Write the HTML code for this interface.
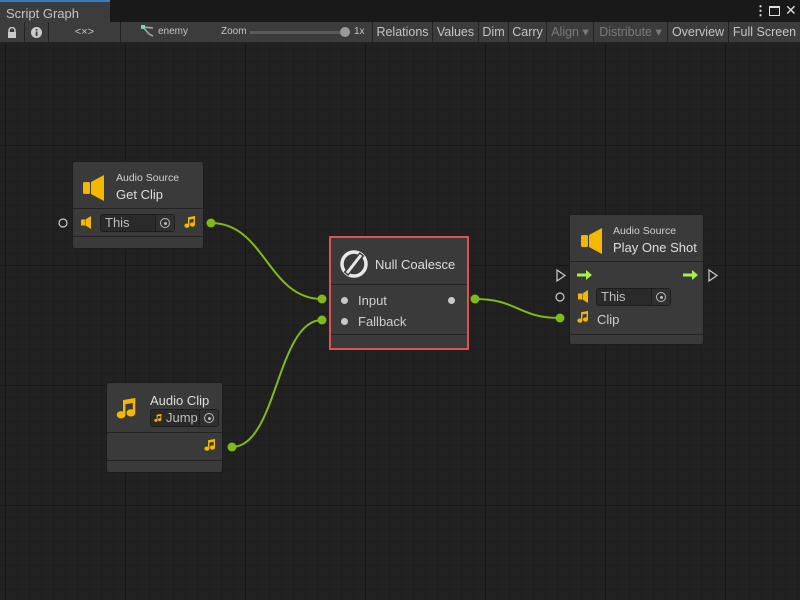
<!DOCTYPE html><html><head><style>
*{margin:0;padding:0;box-sizing:border-box}
body{width:800px;height:600px;overflow:hidden;background:#202020;font-family:"Liberation Sans",sans-serif;position:relative;color:#d2d2d2}
.grid{position:absolute;left:0;top:43px;width:800px;height:557px;
background-image:linear-gradient(#171717 1px,transparent 1px),linear-gradient(90deg,#171717 1px,transparent 1px),linear-gradient(#1d1d1d 1px,transparent 1px),linear-gradient(90deg,#1d1d1d 1px,transparent 1px);
background-size:120px 120px,120px 120px,12px 12px,12px 12px;background-position:0 102px,5px 0,0 6px,5px 0;background-color:#212121}
.tabbar{position:absolute;left:0;top:0;width:800px;height:22px;background:#191919}
.tab{position:absolute;left:0;top:0;width:110px;height:22px;background:#3c3c3c;border-top:2px solid #3a79bb;font-size:13px;color:#c4c4c4;padding:4px 0 0 6px}
.tb{position:absolute;top:22px;height:21px;background:#3c3c3c;border-right:1px solid #232323;border-bottom:1px solid #232323;font-size:12.5px;color:#c4c4c4;text-align:center;line-height:20px}
.dis{color:#7a7a7a}
.node{position:absolute;background:#3a3a3a;border:1px solid #1c1c1c;border-radius:3px}
.sep{position:absolute;left:0;right:0;height:1px;background:#232323}
.t{position:absolute;white-space:nowrap}
.small{font-size:10.5px;color:#d0d0d0}
.big{font-size:13px;color:#dedede}
.field{position:absolute;height:18px;background:#2a2a2a;border:1px solid #1e1e1e;border-radius:3px;font-size:13px;color:#bdbdbd;padding-left:4px;line-height:16px;white-space:nowrap}
.field .ob{position:absolute;right:0;top:0;width:19px;height:16px;border-left:1px solid #1e1e1e;background:#303030}
.ob:after{content:"";position:absolute;left:4px;top:3px;width:8px;height:8px;border:1.3px solid #bbb;border-radius:50%}
.ob:before{content:"";position:absolute;left:8px;top:7px;width:3px;height:3px;background:#bbb;border-radius:50%}
.note{position:absolute}
</style></head><body>
<svg width="0" height="0" style="position:absolute"><defs><g id="n"><path d="M4 1.2 L11 0 V2.6 L4 3.8Z" fill="#f5b800"/><rect x="4" y="1.5" width="1.4" height="8" fill="#f5b800"/><rect x="9.6" y="0.3" width="1.4" height="8" fill="#f5b800"/><ellipse cx="2.9" cy="9.6" rx="2.5" ry="2.1" fill="#f5b800"/><ellipse cx="8.5" cy="8.5" rx="2.5" ry="2.1" fill="#f5b800"/></g></defs></svg>
<div class="grid"></div>
<div class="tabbar"></div>
<div class="tab">Script Graph</div>
<div class="t" style="left:754px;top:3px;color:#ddd;font-size:13px;font-weight:bold">⋮</div>
<div style="position:absolute;left:769px;top:6px;width:11px;height:10px;border:1.5px solid #ddd;border-top-width:2.5px"></div>
<div class="t" style="left:785px;top:2px;color:#ddd;font-size:14px">✕</div>
<div class="tb" style="left:0;width:25px"><svg width="10" height="11" viewBox="0 0 10 11" style="margin-top:5px"><path d="M2 5V3.5a3 3 0 0 1 6 0V5" stroke="#ccc" stroke-width="1.5" fill="none"/><rect x="1" y="5" width="8" height="6" fill="#ccc"/></svg></div>
<div class="tb" style="left:25px;width:24px"><svg width="11" height="11" style="margin-top:5px"><circle cx="5.5" cy="5.5" r="5.5" fill="#ccc"/><rect x="4.7" y="4.5" width="1.8" height="4.5" fill="#3c3c3c"/><rect x="4.7" y="2" width="1.8" height="1.6" fill="#3c3c3c"/></svg></div>
<div class="tb" style="left:49px;width:72px;font-size:11px">&lt;×&gt;</div>
<div class="tb" style="left:121px;width:252px;text-align:left">
<svg width="14" height="12" style="position:absolute;left:20px;top:3px"><path d="M2 2 L8 9 M2 2 L12 3 M8 9 L12 11" stroke="#aaa" stroke-width="1.5" fill="none"/><rect x="0" y="0" width="4" height="4" fill="#6fd6c8"/></svg>
<span style="position:absolute;left:37px;font-size:10px">enemy</span>
<span style="position:absolute;left:100px;font-size:10px">Zoom</span>
<div style="position:absolute;left:129px;top:9px;width:95px;height:3px;background:#5a5a5a"></div>
<div style="position:absolute;left:219px;top:5px;width:10px;height:10px;border-radius:50%;background:#999"></div>
<span style="position:absolute;left:233px;font-size:10px">1x</span></div>
<div class="tb" style="left:373px;width:60px">Relations</div>
<div class="tb" style="left:433px;width:46px">Values</div>
<div class="tb" style="left:479px;width:30px">Dim</div>
<div class="tb" style="left:509px;width:38px">Carry</div>
<div class="tb dis" style="left:547px;width:47px">Align ▾</div>
<div class="tb dis" style="left:594px;width:74px">Distribute ▾</div>
<div class="tb" style="left:668px;width:61px">Overview</div>
<div class="tb" style="left:729px;width:71px;border-right:none">Full Screen</div>

<svg width="800" height="600" style="position:absolute;left:0;top:0">
<g stroke="#7fba1a" stroke-width="2" fill="none">
<path d="M211 223 C265 223 268 299 322 299"/>
<path d="M232 447 C277 447 277 320 322 320"/>
<path d="M475 299 C518 299 518 318 560 318"/>
</g>
<g fill="#7fba1a"><circle cx="211" cy="223" r="4.5"/><circle cx="232" cy="447" r="4.5"/><circle cx="322" cy="299" r="4.5"/><circle cx="322" cy="320" r="4.5"/><circle cx="475" cy="299" r="4.5"/><circle cx="560" cy="318" r="4.5"/></g>
<circle cx="63" cy="223" r="4" stroke="#ccc" stroke-width="1.2" fill="none"/>
<circle cx="560" cy="297" r="4" stroke="#ccc" stroke-width="1.2" fill="none"/>
<path d="M557 270 L565 275.5 L557 281Z" stroke="#ccc" stroke-width="1.2" fill="none"/>
<path d="M709 270 L717 275.5 L709 281Z" stroke="#ccc" stroke-width="1.2" fill="none"/>
</svg>

<!-- Get Clip -->
<div class="node" style="left:72px;top:161px;width:132px;height:88px">
<svg width="22" height="26" style="position:absolute;left:10px;top:13px"><rect x="0" y="7" width="7" height="12" rx="1.5" fill="#f5b800"/><path d="M8 7 L21 0 V26 L8 19Z" fill="#f5b800"/></svg>
<div class="t small" style="left:43px;top:10px">Audio Source</div>
<div class="t big" style="left:43px;top:25px">Get Clip</div>
<div class="sep" style="top:46px"></div>
<svg width="11" height="13" style="position:absolute;left:8px;top:54px"><rect x="0" y="3.5" width="4" height="6" fill="#f5b800"/><path d="M4.5 3.5 L10 0 V13 L4.5 9.5Z" fill="#f5b800"/></svg>
<div class="field" style="left:27px;top:52px;width:75px">This<div class="ob"></div></div>
<svg class="note" width="12" height="12" style="left:111px;top:54px"><use href="#n"/></svg>
<div class="sep" style="top:74px"></div>
</div>

<!-- Null Coalesce -->
<div style="position:absolute;left:329px;top:236px;width:140px;height:114px;border:2px solid #e05252"></div>
<div class="node" style="left:331px;top:238px;width:136px;height:110px;border:none;border-radius:0">
<svg width="28" height="28" style="position:absolute;left:9px;top:12px"><circle cx="14" cy="14" r="12" stroke="#e8e8e8" stroke-width="3.5" fill="none"/><path d="M6 24 L22 4" stroke="#3a3a3a" stroke-width="6"/><path d="M7 23 L21 5" stroke="#e8e8e8" stroke-width="3"/></svg>
<div class="t big" style="left:44px;top:19px">Null Coalesce</div>
<div class="sep" style="top:46px"></div>
<div style="position:absolute;left:10px;top:59px;width:7px;height:7px;border-radius:50%;background:#c8c8c8"></div>
<div class="t big" style="left:27px;top:55px;color:#cfcfcf">Input</div>
<div style="position:absolute;left:117px;top:59px;width:7px;height:7px;border-radius:50%;background:#c8c8c8"></div>
<div style="position:absolute;left:10px;top:80px;width:7px;height:7px;border-radius:50%;background:#c8c8c8"></div>
<div class="t big" style="left:27px;top:76px;color:#cfcfcf">Fallback</div>
<div class="sep" style="top:96px"></div>
</div>

<!-- Play One Shot -->
<div class="node" style="left:569px;top:214px;width:135px;height:131px">
<svg width="22" height="26" style="position:absolute;left:11px;top:13px"><rect x="0" y="7" width="7" height="12" rx="1.5" fill="#f5b800"/><path d="M8 7 L21 0 V26 L8 19Z" fill="#f5b800"/></svg>
<div class="t small" style="left:43px;top:10px">Audio Source</div>
<div class="t big" style="left:43px;top:25px">Play One Shot</div>
<div class="sep" style="top:46px"></div>
<svg width="15" height="10" style="position:absolute;left:7px;top:55px"><path d="M0 3.5H9V0L15 5L9 10V6.5H0Z" fill="#a8f04a"/></svg>
<svg width="15" height="10" style="position:absolute;left:113px;top:55px"><path d="M0 3.5H9V0L15 5L9 10V6.5H0Z" fill="#a8f04a"/></svg>
<svg width="11" height="13" style="position:absolute;left:8px;top:75px"><rect x="0" y="3.5" width="4" height="6" fill="#f5b800"/><path d="M4.5 3.5 L10 0 V13 L4.5 9.5Z" fill="#f5b800"/></svg>
<div class="field" style="left:26px;top:73px;width:75px">This<div class="ob"></div></div>
<svg class="note" width="12" height="12" style="left:7px;top:96px"><use href="#n"/></svg>
<div class="t big" style="left:27px;top:97px;color:#cfcfcf">Clip</div>
<div class="sep" style="top:119px"></div>
</div>

<!-- Audio Clip -->
<div class="node" style="left:106px;top:382px;width:117px;height:91px">
<svg class="note" width="21" height="21" viewBox="0 0 12 12" style="left:9px;top:15px"><use href="#n"/></svg>
<div class="t big" style="left:43px;top:10px">Audio Clip</div>
<div class="field" style="left:43px;top:26px;width:69px;padding-left:15px"><svg width="8" height="8" viewBox="0 0 12 12" style="position:absolute;left:3px;top:4px"><use href="#n"/></svg>Jump<div class="ob"></div></div>
<div class="sep" style="top:49px"></div>
<svg class="note" width="12" height="12" style="left:97px;top:56px"><use href="#n"/></svg>
<div class="sep" style="top:77px"></div>
</div>
</body></html>
